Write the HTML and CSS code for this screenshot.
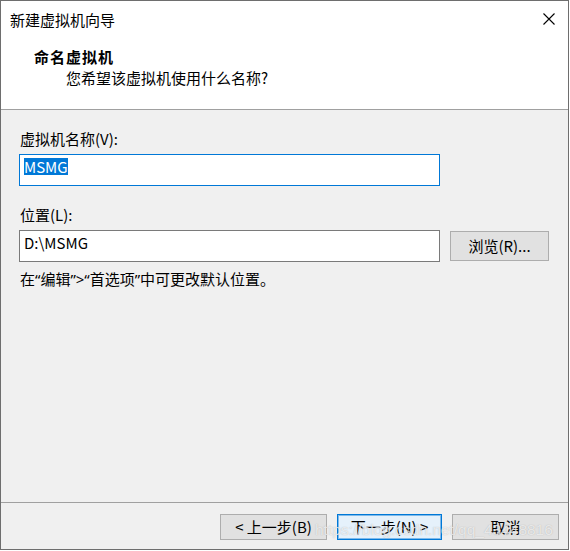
FILE: index.html
```html
<!DOCTYPE html>
<html lang="zh-CN">
<head>
<meta charset="utf-8">
<title>新建虚拟机向导</title>
<link rel="stylesheet" href="styles.css">
</head>
<body>
<div class="window">
  <div class="titlebar">
    <span class="title">新建虚拟机向导</span>
    <span class="close">
      <svg width="12" height="12" viewBox="0 0 12 12"><path d="M0.5 0.5 L11.5 11.5 M11.5 0.5 L0.5 11.5" stroke="#000" stroke-width="1.1" fill="none"/></svg>
    </span>
  </div>
  <div class="header">
    <div class="h-title">命名虚拟机</div>
    <div class="h-sub">您希望该虚拟机使用什么名称?</div>
  </div>
  <div class="content">
    <div class="label first">虚拟机名称(V):</div>
    <div class="field focused"><span class="sel">MSMG</span></div>
    <div class="label">位置(L):</div>
    <div class="row">
      <div class="field">D:\MSMG</div>
      <div class="btn browse">浏览(R)...</div>
    </div>
    <div class="hint">在“编辑”&gt;“首选项”中可更改默认位置。</div>
  </div>
  <div class="footer">
    <div class="btn back">&lt; 上一步(B)</div>
    <div class="btn next">下一步(N) &gt;</div>
    <div class="btn cancel">取消</div>
  </div>
  <div class="watermark">https://blog.csdn.net/qq_43448816</div>
</div>
</body>
</html>
```

FILE: styles.css
```css
html, body {
  margin: 0;
  padding: 0;
  background: #ffffff;
}

body {
  font-family: "Noto Sans CJK SC", "Noto Sans", sans-serif;
  font-size: 15px;
  line-height: 20px;
  color: #000;
}

.window {
  position: relative;
  width: 569px;
  height: 550px;
  box-sizing: border-box;
  border: 1px solid #6e6e6e;
  display: flex;
  flex-direction: column;
  background: #f0f0f0;
  overflow: hidden;
}

.titlebar {
  height: 38px;
  flex: none;
  background: #fff;
  display: flex;
  align-items: center;
  justify-content: space-between;
  padding: 0 13px 0 9px;
}

.title {
  color: #000;
}

.close {
  display: flex;
  width: 12px;
  height: 12px;
  margin-top: -2px;
}

.header {
  flex: none;
  background: #fff;
  padding: 8px 0 21px 33px;
  border-bottom: 1px solid #a0a0a0;
}

.h-title {
  font-weight: 700;
  letter-spacing: 1px;
}

.h-sub {
  margin-top: 1px;
  padding-left: 32px;
}

.content {
  flex: 1;
  padding: 0 19px 0 18px;
  display: flex;
  flex-direction: column;
  align-items: flex-start;
}

.label {
  margin-top: 19px;
  padding-left: 1px;
}

.field {
  margin-top: 5px;
  width: 421px;
  height: 32px;
  box-sizing: border-box;
  border: 1px solid #7a7a7a;
  background: #fff;
  padding: 3px 4px 0 4px;
  line-height: 17px;
}

.field.focused {
  border-color: #0078d7;
}

.sel {
  background: #0078d7;
  color: #fff;
  display: inline-block;
  height: 17px;
}

.row {
  display: flex;
  align-items: center;
  gap: 10px;
  margin-top: 5px;
}

.row .field {
  margin-top: 0;
  flex: none;
}

.btn {
  box-sizing: border-box;
  border: 1px solid #adadad;
  background: #e1e1e1;
  display: flex;
  align-items: center;
  justify-content: center;
  color: #000;
}

.browse {
  width: 99px;
  height: 30px;
}

.hint {
  margin-top: 7px;
  padding-left: 1px;
  font-family: "Noto Sans", "Noto Sans CJK SC", sans-serif;
}

.footer {
  flex: none;
  height: 47px;
  box-sizing: border-box;
  border-top: 1px solid #a0a0a0;
  display: flex;
  justify-content: flex-end;
  align-items: flex-start;
  gap: 10px;
  padding: 11px 9px 0 0;
}

.footer .btn {
  height: 26px;
  width: 107px;
}

.footer .next {
  width: 105px;
  border-color: #0078d7;
  background: #e5f1fb;
  box-shadow: inset 0 0 0 1px rgba(0, 120, 215, 0.45);
}

.watermark {
  position: absolute;
  left: 314px;
  top: 519px;
  font-family: "Liberation Sans", Arial, sans-serif;
  font-size: 15.5px;
  line-height: 20px;
  color: rgba(255, 255, 255, 0.7);
  text-shadow: 0 0 1px rgba(120, 120, 120, 0.5);
  white-space: nowrap;
  pointer-events: none;
}
```
